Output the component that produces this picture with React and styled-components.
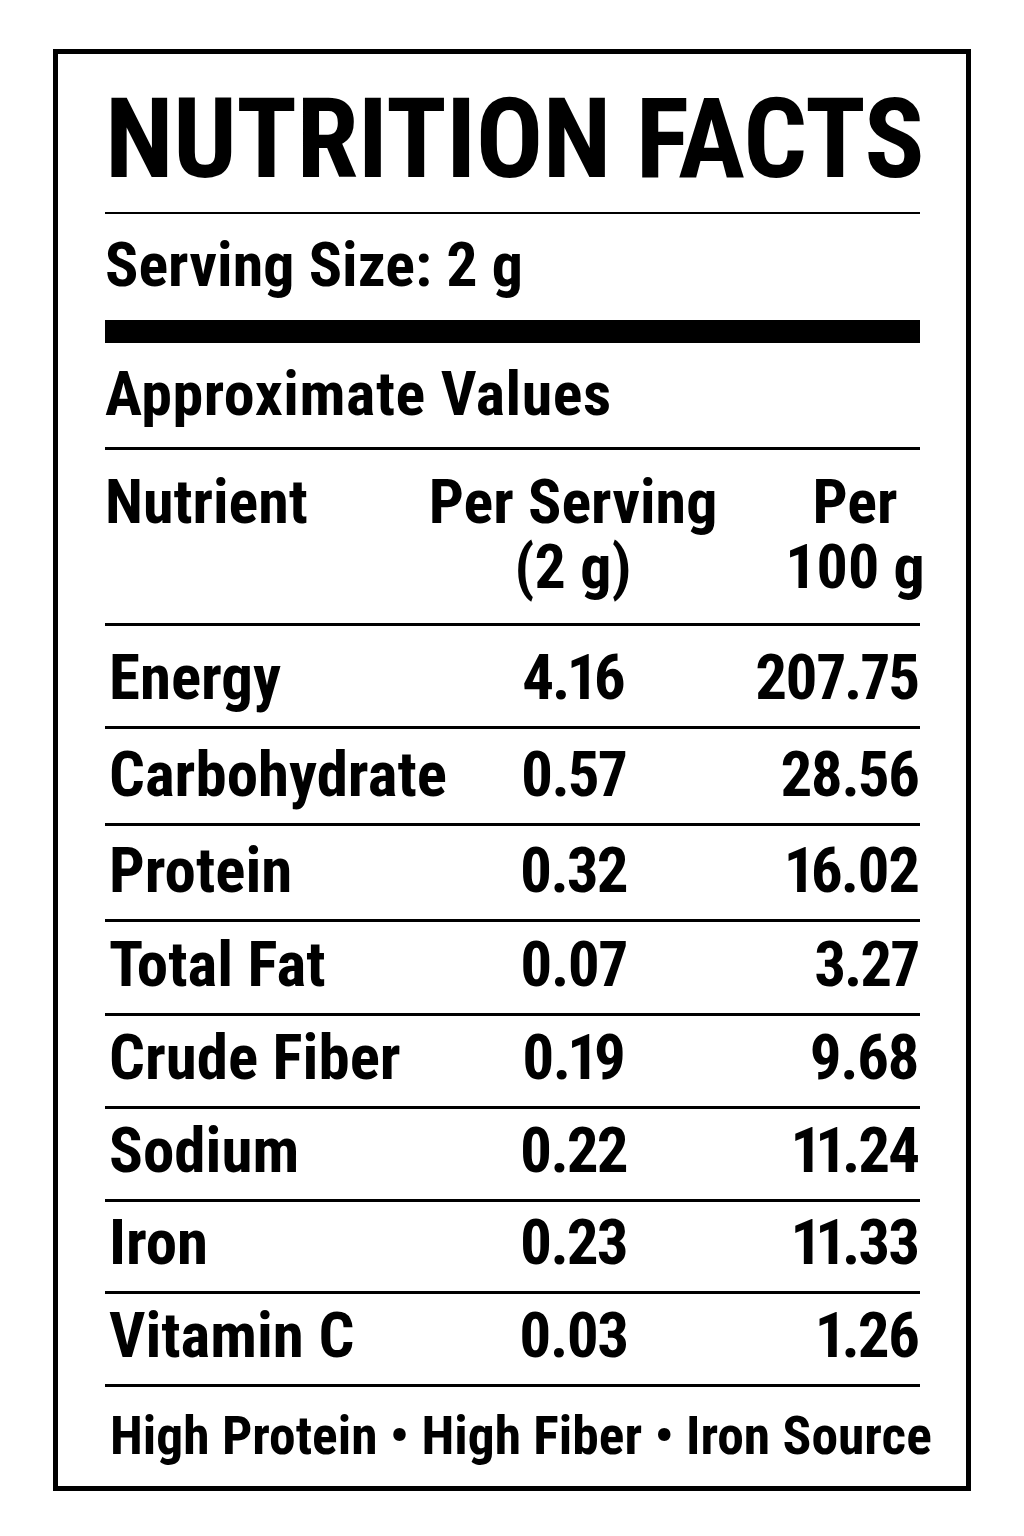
import React from "react";
import styled, { createGlobalStyle } from "styled-components";

const GlobalStyle = createGlobalStyle`
  html, body {
    margin: 0;
    padding: 0;
    background: #ffffff;
  }
  body {
    font-family: Roboto, "Liberation Sans", sans-serif;
    font-stretch: 75%;
    color: #000;
  }
`;

const Page = styled.div`
  padding: 49px 0 0 53px;
`;

const Label = styled.div`
  box-sizing: border-box;
  width: 918px;
  height: 1442px;
  border: 5px solid #000;
  padding: 29px 46px 0 47px;
  font-weight: 700;
`;

const Title = styled.h1`
  margin: 0;
  font-size: 112px;
  line-height: 112px;
  font-weight: 700;
  letter-spacing: -0.6px;
  white-space: nowrap;
`;

const Rule = styled.div`
  height: ${(p) => p.$size || 3}px;
  background: #000;
  margin-top: ${(p) => p.$gap || 0}px;
`;

const Line = styled.div`
  font-size: 62px;
  line-height: 62px;
  letter-spacing: ${(p) => p.$spacing || 0}px;
  margin-top: ${(p) => p.$gap || 0}px;
  white-space: nowrap;
`;

const HeadRow = styled.div`
  display: grid;
  grid-template-columns: 325px 286px 1fr;
  margin-top: 19px;
  font-size: 62px;
  line-height: 65px;
  height: 130px;
`;

const justify = { left: "flex-start", center: "center", right: "flex-end" };

const Cell = styled.div`
  display: flex;
  justify-content: ${(p) => justify[p.$align || "left"]};
  white-space: nowrap;
  ${(p) =>
    p.$num &&
    `
    letter-spacing: -2px;
    font-variant-numeric: proportional-nums;
  `}
  ${(p) =>
    p.$last &&
    `
    justify-self: end;
    width: 126px;
    margin-right: 2px;
  `}
`;

const HeadCell = styled(Cell)`
  flex-direction: column;
  align-items: ${(p) => (p.$align === "center" ? "center" : "flex-start")};
`;

const Row = styled.div`
  display: grid;
  grid-template-columns: 321px 286px 1fr;
  align-items: end;
  box-sizing: content-box;
  height: ${(p) => p.$h}px;
  padding-left: 4px;
  border-bottom: 3px solid #000;
  font-size: 63px;
  line-height: 62px;
  & > div {
    padding-bottom: 17px;
  }
`;

const Footer = styled.div`
  margin-top: 23px;
  padding-left: 5px;
  font-size: 53.5px;
  line-height: 52px;
  white-space: nowrap;
`;

const rows = [
  { name: "Energy", serv: "4.16", per: "207.75", h: 100 },
  { name: "Carbohydrate", serv: "0.57", per: "28.56", h: 94 },
  { name: "Protein", serv: "0.32", per: "16.02", h: 93 },
  { name: "Total Fat", serv: "0.07", per: "3.27", h: 91 },
  { name: "Crude Fiber", serv: "0.19", per: "9.68", h: 90 },
  { name: "Sodium", serv: "0.22", per: "11.24", h: 90 },
  { name: "Iron", serv: "0.23", per: "11.33", h: 89 },
  { name: "Vitamin C", serv: "0.03", per: "1.26", h: 90 },
];

const App = () => {
  return (
    <Page>
      <GlobalStyle />
      <Label>
        <Title>NUTRITION FACTS</Title>
        <Rule $size={2} $gap={17} />
        <Line $gap={20}>Serving Size: 2 g</Line>
        <Rule $size={23} $gap={24} />
        <Line $gap={20} $spacing={0.6}>
          Approximate Values
        </Line>
        <Rule $gap={22} />
        <HeadRow>
          <HeadCell>
            <span>Nutrient</span>
          </HeadCell>
          <HeadCell $align="center">
            <span>Per Serving</span>
            <span>(2 g)</span>
          </HeadCell>
          <HeadCell $align="center" $last>
            <span>Per</span>
            <span>100 g</span>
          </HeadCell>
        </HeadRow>
        <Rule $gap={24} />
        {rows.map((r) => (
          <Row key={r.name} $h={r.h}>
            <Cell>{r.name}</Cell>
            <Cell $align="center" $num>
              {r.serv}
            </Cell>
            <Cell $align="right" $num $last>
              {r.per}
            </Cell>
          </Row>
        ))}
        <Footer>High Protein • High Fiber • Iron Source</Footer>
      </Label>
    </Page>
  );
};

export default App;
